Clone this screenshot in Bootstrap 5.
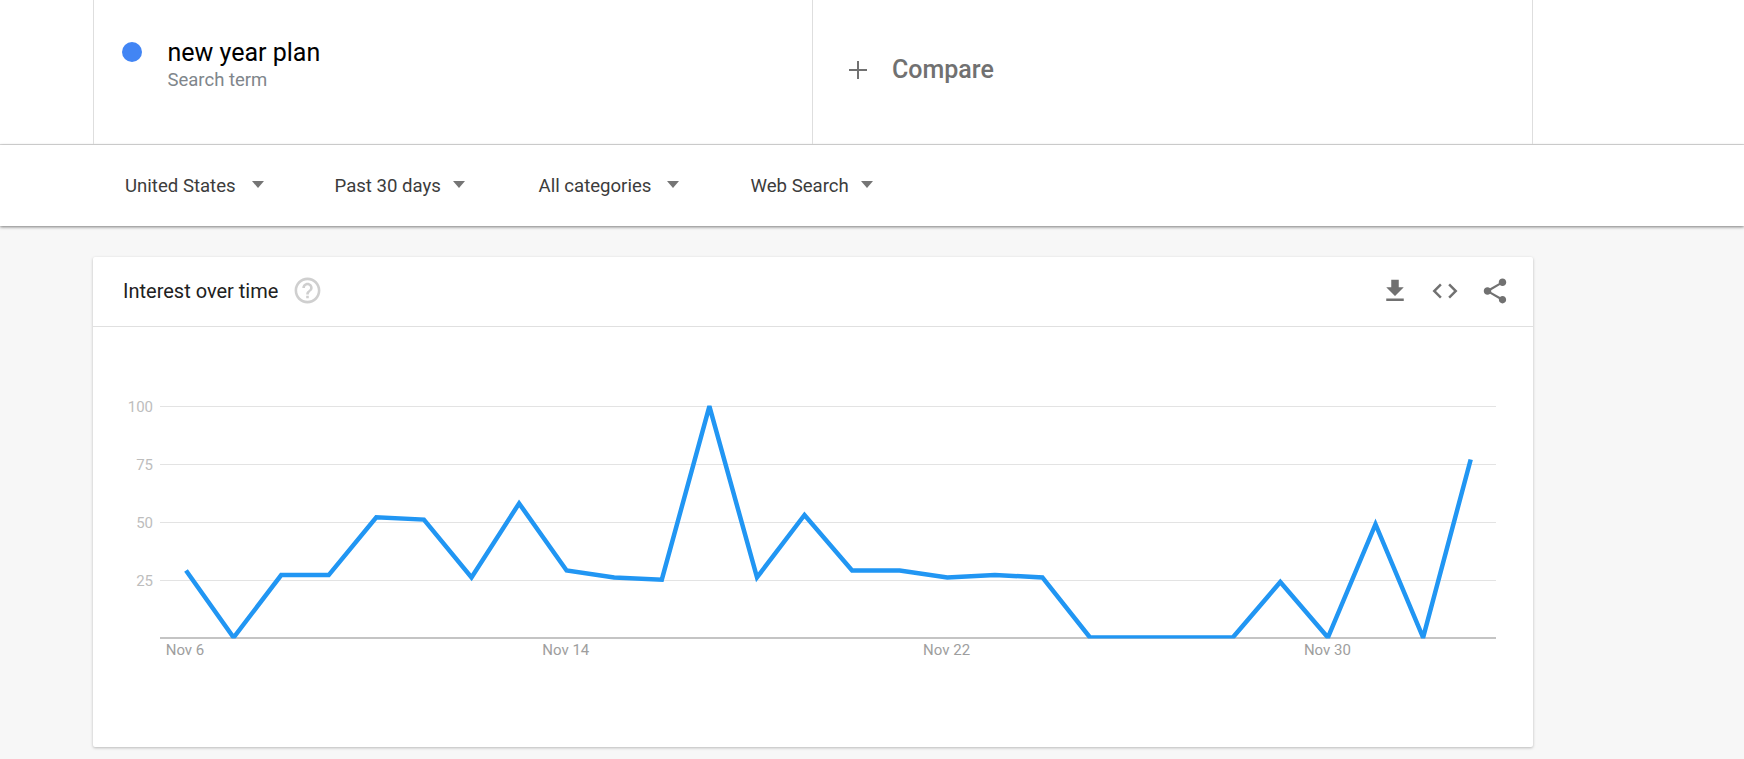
<!DOCTYPE html>
<html lang="en">
<head>
<meta charset="utf-8">
<title>Interest over time</title>
<link href="https://cdn.jsdelivr.net/npm/bootstrap@5.3.0/dist/css/bootstrap.min.css" rel="stylesheet">
<style>
html,body{height:759px;overflow:hidden}
body{background:#f7f7f7;font-family:Roboto,"Liberation Sans",sans-serif;color:#212121}
.hero-strip{background:#fff;height:145px;border-bottom:1px solid #dedede;padding-left:93px}
.term-cell{height:144px;width:719px;border-left:1px solid #dedede}
.term-cell.last-cell{width:721px;border-right:1px solid #dedede;padding-bottom:5px}
.term-dot{width:20px;height:20px;background:#4285f4;margin:42px 26px 0 27.5px;flex:none}
.term-name{font-size:25px;line-height:28px;color:#000;margin-top:39px}
.term-kind{font-size:18.5px;line-height:25px;color:#80868b;padding-top:1px}
.plus-sign{margin-left:36px}
.compare-label{font-size:25px;font-weight:500;color:#717171;margin-left:25px}
.filter-strip{background:#fff;height:81px;padding:2px 0 0 125px;box-shadow:0 1px 3px rgba(0,0,0,.5)}
.filter-item{font-size:18.6px;color:#3c3c3c}
.filter-item:nth-child(1){width:210px}
.filter-item:nth-child(2){width:204px;margin-left:-.5px}
.filter-item:nth-child(3){width:212px}
.caret-mark{width:0;height:0;border-left:6.5px solid transparent;border-right:6.5px solid transparent;border-top:7px solid #757575;margin-top:-3px;flex:none}
.filter-item:nth-child(1) .caret-mark,.filter-item:nth-child(3) .caret-mark{margin-left:16px}
.filter-item:nth-child(2) .caret-mark,.filter-item:nth-child(4) .caret-mark{margin-left:12px}
.trend-card{width:1440px;height:490px;margin:31px 0 0 93px;border:0;border-radius:2px;box-shadow:0 1px 3px rgba(0,0,0,.25)}
.trend-head{height:70px;border-bottom:1px solid #e0e0e0;padding:0 23px 2px 30px}
.trend-title{font-size:20px;color:#212121;margin-right:14px}
.tool-icons{gap:20px;fill:#717171}
.trend-plot{display:block}
.axis-y{font-size:15px;fill:#bdbdbd;text-anchor:end;font-family:Roboto,"Liberation Sans",sans-serif}
.axis-x{font-size:15px;fill:#9e9e9e;text-anchor:middle;font-family:Roboto,"Liberation Sans",sans-serif}
</style>
</head>
<body>
<header class="hero-strip d-flex">
  <div class="term-cell d-flex">
    <span class="term-dot rounded-circle"></span>
    <div>
      <div class="term-name">new year plan</div>
      <div class="term-kind">Search term</div>
    </div>
  </div>
  <div class="term-cell last-cell d-flex align-items-center">
    <svg class="plus-sign" width="18" height="18" viewBox="0 0 18 18"><path d="M8 0h2v8h8v2h-8v8H8v-8H0V8h8z" fill="#717171"/></svg>
    <span class="compare-label">Compare</span>
  </div>
</header>
<nav class="filter-strip d-flex align-items-center">
  <div class="filter-item d-flex align-items-center"><span>United States</span><span class="caret-mark"></span></div>
  <div class="filter-item d-flex align-items-center"><span>Past 30 days</span><span class="caret-mark"></span></div>
  <div class="filter-item d-flex align-items-center"><span>All categories</span><span class="caret-mark"></span></div>
  <div class="filter-item d-flex align-items-center"><span>Web Search</span><span class="caret-mark"></span></div>
</nav>
<section class="card trend-card">
  <div class="trend-head d-flex align-items-center justify-content-between">
    <div class="d-flex align-items-center">
      <span class="trend-title">Interest over time</span>
      <svg width="31" height="31" viewBox="0 0 24 24" fill="#cfcfcf"><path d="M11 18h2v-2h-2v2zm1-16C6.48 2 2 6.48 2 12s4.48 10 10 10 10-4.48 10-10S17.52 2 12 2zm0 18c-4.41 0-8-3.59-8-8s3.59-8 8-8 8 3.59 8 8-3.59 8-8 8zm0-14c-2.21 0-4 1.79-4 4h2c0-1.1.9-2 2-2s2 .9 2 2c0 2-3 1.75-3 5h2c0-2.25 3-2.5 3-5 0-2.21-1.79-4-4-4z"/></svg>
    </div>
    <div class="tool-icons d-flex align-items-center">
      <svg width="30" height="30" viewBox="0 0 24 24"><path d="M19 9h-4V3H9v6H5l7 7 7-7zM5 18v2h14v-2H5z"/></svg>
      <svg width="30" height="30" viewBox="0 0 24 24"><path d="M9.4 16.6L4.8 12l4.6-4.6L8 6l-6 6 6 6 1.4-1.4zm5.2 0l4.6-4.6-4.6-4.6L16 6l6 6-6 6-1.4-1.4z"/></svg>
      <svg width="30" height="30" viewBox="0 0 24 24"><path d="M18 16.08c-.76 0-1.44.3-1.96.77L8.91 12.7c.05-.23.09-.46.09-.7s-.04-.47-.09-.7l7.05-4.11c.54.5 1.25.81 2.04.81 1.66 0 3-1.34 3-3s-1.34-3-3-3-3 1.34-3 3c0 .24.04.47.09.7L8.04 9.81C7.5 9.31 6.79 9 6 9c-1.66 0-3 1.34-3 3s1.34 3 3 3c.79 0 1.5-.31 2.04-.81l7.12 4.16c-.05.21-.08.43-.08.65 0 1.61 1.31 2.92 2.92 2.92 1.61 0 2.92-1.31 2.92-2.92s-1.31-2.92-2.92-2.92z"/></svg>
    </div>
  </div>
  <svg class="trend-plot" id="plot" width="1440" height="420" viewBox="93 327 1440 420"></svg>
</section>
<script>
var vals=[29,0,27,27,52,51,26,58,29,26,25,100,26,53,29,29,26,27,26,0,0,0,0,24,0,49,0,77];
var svg='<defs><clipPath id="plotclip"><rect x="160" y="405.5" width="1336" height="233"/></clipPath></defs>';
[[100,406.5],[75,464.5],[50,522.5],[25,580.5]].forEach(function(g){
  svg+='<line x1="160" x2="1496" y1="'+g[1]+'" y2="'+g[1]+'" stroke="#e3e3e3" stroke-width="1.2"/>';
  svg+='<text class="axis-y" x="153" y="'+(g[1]+5)+'">'+g[0]+'</text>';
});
svg+='<line x1="160" x2="1496" y1="638" y2="638" stroke="#b0b0b0" stroke-width="1.4"/>';
[['Nov 6',0],['Nov 14',8],['Nov 22',16],['Nov 30',24]].forEach(function(t){
  svg+='<text class="axis-x" x="'+(185+47.6*t[1])+'" y="655">'+t[0]+'</text>';
});
var pts=vals.map(function(v,i){return (186+47.58*i).toFixed(1)+','+(637.5-v*2.312).toFixed(1)}).join(' ');
svg+='<polyline clip-path="url(#plotclip)" points="'+pts+'" fill="none" stroke="#2196f3" stroke-width="4.5" stroke-linejoin="miter"/>';
document.getElementById('plot').innerHTML=svg;
</script>
<script src="https://cdn.jsdelivr.net/npm/bootstrap@5.3.0/dist/js/bootstrap.bundle.min.js"></script>
</body>
</html>
